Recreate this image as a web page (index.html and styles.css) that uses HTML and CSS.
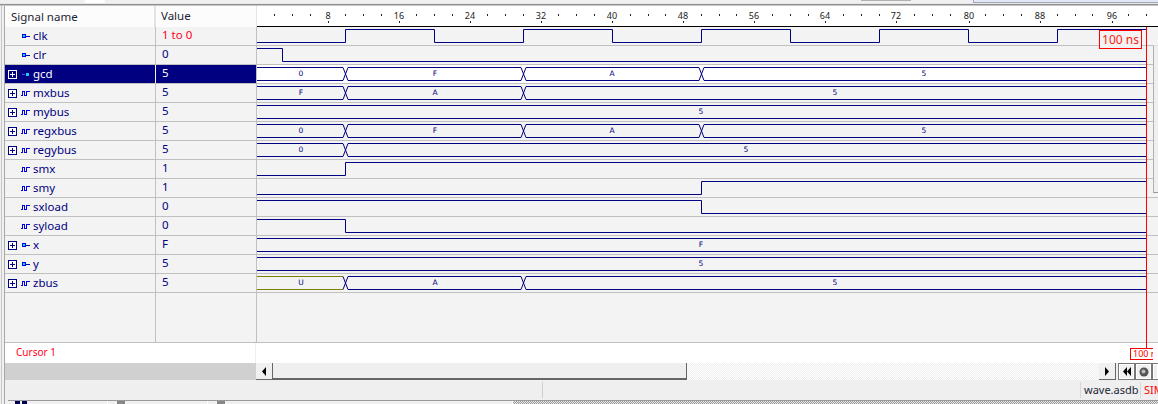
FILE: index.html
```html
<!DOCTYPE html>
<html lang="en">
<head>
<meta charset="utf-8">
<title>wave.asdb</title>
<link rel="stylesheet" href="styles.css">
</head>
<body>
<div class="window">
  <div class="topstrip"><span class="ts-white"></span><span class="ts-gray"></span><span class="ts-blue"></span></div>
  <div class="main">
    <div class="rail"></div>
    <div class="content">
    <div class="panel">
      <div class="row header">
        <div class="name"><span class="head-label">Signal name</span></div>
        <div class="value">Value</div>
        <div class="wave">
          <svg class="ruler" viewBox="257 0 901 20" width="901" height="20">
            <g class="ticks">
              <path d="M274.5 8v2M292.5 8v2M310.5 8v2M345.5 8v2M363.5 8v2M381.5 8v2M416.5 8v2M434.5 8v2M452.5 8v2M487.5 8v2M505.5 8v2M523.5 8v2M558.5 8v2M576.5 8v2M594.5 8v2M630.5 8v2M648.5 8v2M665.5 8v2M701.5 8v2M719.5 8v2M736.5 8v2M772.5 8v2M790.5 8v2M808.5 8v2M843.5 8v2M861.5 8v2M879.5 8v2M914.5 8v2M932.5 8v2M950.5 8v2M985.5 8v2M1003.5 8v2M1021.5 8v2M1057.5 8v2M1075.5 8v2M1092.5 8v2M1128.5 8v2M1146.5 8v2"/>
              <path d="M328.5 15v2M399.5 15v2M470.5 15v2M541.5 15v2M612.5 15v2M683.5 15v2M754.5 15v2M825.5 15v2M896.5 15v2M969.5 15v2M1040.5 15v2M1112.5 15v2"/>
            </g>
            <g class="ruler-text">
              <text x="328" y="13">8</text><text x="399" y="13">16</text><text x="470" y="13">24</text><text x="541" y="13">32</text>
              <text x="612" y="13">40</text><text x="683" y="13">48</text><text x="754" y="13">56</text><text x="825" y="13">64</text>
              <text x="896" y="13">72</text><text x="969" y="13">80</text><text x="1040" y="13">88</text><text x="1112" y="13">96</text>
            </g>
          </svg>
        </div>
      </div>

      <div class="row">
        <div class="name"><span class="box-gap"></span><svg class="ico" viewBox="0 0 10 7" width="10" height="7"><rect class="port" x="1.5" y="1.5" width="3" height="3"/><path class="port-l" d="M5 3.5h4"/></svg><span class="label">clk</span></div>
        <div class="value changed">1 to 0</div>
        <div class="wave"><svg viewBox="257 0 901 19" width="901" height="19"><path class="sig" d="M257 15.5H345.5V2.5H434.5V15.5H523.5V2.5H612.5V15.5H701.5V2.5H790.5V15.5H879.5V2.5H968.5V15.5H1057.5V2.5H1146"/></svg></div>
      </div>

      <div class="row">
        <div class="name"><span class="box-gap"></span><svg class="ico" viewBox="0 0 10 7" width="10" height="7"><rect class="port" x="1.5" y="1.5" width="3" height="3"/><path class="port-l" d="M5 3.5h4"/></svg><span class="label">clr</span></div>
        <div class="value">0</div>
        <div class="wave"><svg viewBox="257 0 901 19" width="901" height="19"><path class="sig" d="M257 2.5H282.5V15.5H1146"/></svg></div>
      </div>

      <div class="row selected">
        <div class="name"><span class="plus"></span><svg class="ico" viewBox="0 0 10 7" width="10" height="7"><path class="int-l" d="M1 3.5h3"/><rect class="int" x="5" y="2" width="3" height="3"/></svg><span class="label">gcd</span></div>
        <div class="value">5</div>
        <div class="wave"><svg viewBox="257 0 901 19" width="901" height="19"><rect class="sel-bg" x="257" y="0" width="889" height="18"/><path class="sig" d="M257 2.5H343L348 15.5H521L526 2.5H699L704 15.5H1146M257 15.5H343L348 2.5H521L526 15.5H699L704 2.5H1146"/><g class="bus-text"><text x="301" y="10.5">0</text><text x="435" y="10.5">F</text><text x="612" y="10.5">A</text><text x="924" y="10.5">5</text></g></svg></div>
      </div>

      <div class="row">
        <div class="name"><span class="plus"></span><svg class="ico" viewBox="0 0 10 7" width="10" height="7"><path class="net" d="M0 5.5H1.5V1.5H3.5V5.5H5.5V1.5H9"/></svg><span class="label">mxbus</span></div>
        <div class="value">5</div>
        <div class="wave"><svg viewBox="257 0 901 19" width="901" height="19"><path class="sig" d="M257 2.5H343L348 15.5H521L526 2.5H1146M257 15.5H343L348 2.5H521L526 15.5H1146"/><g class="bus-text"><text x="301" y="10.5">F</text><text x="435" y="10.5">A</text><text x="835" y="10.5">5</text></g></svg></div>
      </div>

      <div class="row">
        <div class="name"><span class="plus"></span><svg class="ico" viewBox="0 0 10 7" width="10" height="7"><path class="net" d="M0 5.5H1.5V1.5H3.5V5.5H5.5V1.5H9"/></svg><span class="label">mybus</span></div>
        <div class="value">5</div>
        <div class="wave"><svg viewBox="257 0 901 19" width="901" height="19"><path class="sig" d="M257 2.5H1146M257 15.5H1146"/><g class="bus-text"><text x="701" y="10.5">5</text></g></svg></div>
      </div>

      <div class="row">
        <div class="name"><span class="plus"></span><svg class="ico" viewBox="0 0 10 7" width="10" height="7"><path class="net" d="M0 5.5H1.5V1.5H3.5V5.5H5.5V1.5H9"/></svg><span class="label">regxbus</span></div>
        <div class="value">5</div>
        <div class="wave"><svg viewBox="257 0 901 19" width="901" height="19"><path class="sig" d="M257 2.5H343L348 15.5H521L526 2.5H699L704 15.5H1146M257 15.5H343L348 2.5H521L526 15.5H699L704 2.5H1146"/><g class="bus-text"><text x="301" y="10.5">0</text><text x="435" y="10.5">F</text><text x="612" y="10.5">A</text><text x="924" y="10.5">5</text></g></svg></div>
      </div>

      <div class="row">
        <div class="name"><span class="plus"></span><svg class="ico" viewBox="0 0 10 7" width="10" height="7"><path class="net" d="M0 5.5H1.5V1.5H3.5V5.5H5.5V1.5H9"/></svg><span class="label">regybus</span></div>
        <div class="value">5</div>
        <div class="wave"><svg viewBox="257 0 901 19" width="901" height="19"><path class="sig" d="M257 2.5H343L348 15.5H1146M257 15.5H343L348 2.5H1146"/><g class="bus-text"><text x="301" y="10.5">0</text><text x="746" y="10.5">5</text></g></svg></div>
      </div>

      <div class="row">
        <div class="name"><span class="box-gap"></span><svg class="ico" viewBox="0 0 10 7" width="10" height="7"><path class="net" d="M0 5.5H1.5V1.5H3.5V5.5H5.5V1.5H9"/></svg><span class="label">smx</span></div>
        <div class="value">1</div>
        <div class="wave"><svg viewBox="257 0 901 19" width="901" height="19"><path class="sig" d="M257 15.5H345.5V2.5H1146"/></svg></div>
      </div>

      <div class="row">
        <div class="name"><span class="box-gap"></span><svg class="ico" viewBox="0 0 10 7" width="10" height="7"><path class="net" d="M0 5.5H1.5V1.5H3.5V5.5H5.5V1.5H9"/></svg><span class="label">smy</span></div>
        <div class="value">1</div>
        <div class="wave"><svg viewBox="257 0 901 19" width="901" height="19"><path class="sig" d="M257 15.5H701.5V2.5H1146"/></svg></div>
      </div>

      <div class="row">
        <div class="name"><span class="box-gap"></span><svg class="ico" viewBox="0 0 10 7" width="10" height="7"><path class="net" d="M0 5.5H1.5V1.5H3.5V5.5H5.5V1.5H9"/></svg><span class="label">sxload</span></div>
        <div class="value">0</div>
        <div class="wave"><svg viewBox="257 0 901 19" width="901" height="19"><path class="sig" d="M257 2.5H701.5V15.5H1146"/></svg></div>
      </div>

      <div class="row">
        <div class="name"><span class="box-gap"></span><svg class="ico" viewBox="0 0 10 7" width="10" height="7"><path class="net" d="M0 5.5H1.5V1.5H3.5V5.5H5.5V1.5H9"/></svg><span class="label">syload</span></div>
        <div class="value">0</div>
        <div class="wave"><svg viewBox="257 0 901 19" width="901" height="19"><path class="sig" d="M257 2.5H345.5V15.5H1146"/></svg></div>
      </div>

      <div class="row">
        <div class="name"><span class="plus"></span><svg class="ico" viewBox="0 0 10 7" width="10" height="7"><rect class="port" x="1.5" y="1.5" width="3" height="3"/><path class="port-l" d="M5 3.5h4"/></svg><span class="label">x</span></div>
        <div class="value">F</div>
        <div class="wave"><svg viewBox="257 0 901 19" width="901" height="19"><path class="sig" d="M257 2.5H1146M257 15.5H1146"/><g class="bus-text"><text x="701" y="10.5">F</text></g></svg></div>
      </div>

      <div class="row">
        <div class="name"><span class="plus"></span><svg class="ico" viewBox="0 0 10 7" width="10" height="7"><rect class="port" x="1.5" y="1.5" width="3" height="3"/><path class="port-l" d="M5 3.5h4"/></svg><span class="label">y</span></div>
        <div class="value">5</div>
        <div class="wave"><svg viewBox="257 0 901 19" width="901" height="19"><path class="sig" d="M257 2.5H1146M257 15.5H1146"/><g class="bus-text"><text x="701" y="10.5">5</text></g></svg></div>
      </div>

      <div class="row">
        <div class="name"><span class="plus"></span><svg class="ico" viewBox="0 0 10 7" width="10" height="7"><path class="net" d="M0 5.5H1.5V1.5H3.5V5.5H5.5V1.5H9"/></svg><span class="label">zbus</span></div>
        <div class="value">5</div>
        <div class="wave"><svg viewBox="257 0 901 19" width="901" height="19"><path class="undef" d="M257 2.5H343M257 15.5H343"/><path class="sig" d="M343 2.5L348 15.5H521L526 2.5H1146M343 15.5L348 2.5H521L526 15.5H1146"/><g class="bus-text"><text x="301" y="10.5">U</text><text x="435" y="10.5">A</text><text x="835" y="10.5">5</text></g></svg></div>
      </div>

      <div class="row filler">
        <div class="name"></div>
        <div class="value"></div>
        <div class="wave"></div>
      </div>

      <div class="cursor-row">
        <div class="cursor-name">Cursor 1</div>
        <div class="cursor-track"><span class="cursor-flag">100 ns</span></div>
      </div>

      <div class="scroll-row">
        <div class="scroll-left"></div>
        <button class="btn btn-left"><svg viewBox="0 0 6 9" width="6" height="9"><path d="M5 0V9L1 4.5Z"/></svg></button>
        <div class="thumb"></div>
        <div class="scroll-track"></div>
        <button class="btn btn-right"><svg viewBox="0 0 6 9" width="6" height="9"><path d="M1 0V9L5 4.5Z"/></svg></button>
        <button class="btn btn-nav"><svg viewBox="0 0 10 9" width="10" height="9"><path d="M5 0V9L1 4.5ZM9 0V9L5 4.5Z"/></svg></button>
        <button class="btn btn-nav"><svg viewBox="0 0 10 10" width="10" height="10"><circle cx="5" cy="5" r="4.5" fill="#555"/><circle cx="4.5" cy="4.5" r="2" fill="#bbb"/></svg></button>
        <button class="btn btn-nav btn-last"></button>
      </div>

      <div class="marker-line"></div>
      <div class="time-flag">100 ns</div>
      <div class="vscroll"></div>
    </div>
    <div class="status">
      <div class="status-fill"></div>
      <div class="status-cell">wave.asdb</div>
      <div class="status-cell sim">SIM</div>
    </div>
    <div class="bottom-strip">
      <div class="tab tab-first"><span class="tab-ico navy"></span><span class="tab-ico navy"></span></div>
      <div class="tab"><span class="tab-ico gray"></span></div>
      <div class="tab tab-wide"><span class="tab-ico gray"></span></div>
      <div class="dither"></div>
    </div>
    </div>
  </div>
</div>
</body>
</html>
```
FILE: styles.css
```css
* { box-sizing: border-box; }
html, body { margin: 0; padding: 0; }
body { background: #f0f0f0; font-family: "Noto Sans", "Liberation Sans", sans-serif; font-size: 11.5px; color: #000080; overflow: hidden; }

.window { width: 1158px; height: 404px; display: flex; flex-direction: column; overflow: hidden; }

.topstrip { display: flex; align-items: flex-start; height: 6px; flex: none; background: linear-gradient(#f0f0f0 0 3px, #e8e8e8 3px 4px, #8e8e8e 4px 5px, #c8c8c8 5px 6px); }
.ts-white { width: 20px; height: 3px; margin-left: 85px; background: #fff; }
.ts-gray { width: 50px; height: 1px; margin-left: 756px; background: #b0b0b0; }
.ts-blue { width: 185px; height: 3px; margin-left: auto; background: #e2e8f6; border-left: 1px solid #a0a8b8; border-bottom: 1px solid #a0a8b8; }

.main { display: flex; flex: 1; min-height: 0; }
.rail { width: 5px; flex: none; background: linear-gradient(90deg, #f0f0f0 0 1px, #c8c8c8 1px 2px, #f0f0f0 2px 5px); border-right: 1px solid #a8a8a8; }
.content { width: 1153px; flex: none; display: flex; flex-direction: column; }
.panel { position: relative; flex: none; display: flex; flex-direction: column; }

.row { display: flex; height: 19px; flex: none; background: #f3f3f3; border-bottom: 1px solid #c0c0c0; }
.row.header { height: 21px; background: #fff; border-bottom: 0; }
.row.filler { height: 50px; }

.name { width: 151px; flex: none; display: flex; align-items: center; padding-left: 3px; border-right: 1px solid #c0c0c0; white-space: nowrap; }
.label { padding-bottom: 2px; }
.value { width: 101px; flex: none; padding-left: 6px; line-height: 16px; border-right: 1px solid #c0c0c0; color: #000080; }
.wave { flex: 1; min-width: 0; overflow: hidden; }
.wave svg { display: block; }

.header .name { border-right: 2px solid #e4e4e4; color: #1c2433; background: #fcfcfc; padding-left: 6px; }
.header .value { border-right: 1px solid #e4e4e4; color: #1c2433; background: #fcfcfc; padding-left: 5px; line-height: 20px; }
.header .wave { height: 21px; border-bottom: 1px solid #000; }
.head-label { display: block; }

.changed { color: #ff0020; }

.selected .name, .selected .value { background: #000080; color: #fff; }
.selected .name { border-right-color: #f3f3f3; }
.sel-bg { fill: #fff; }

.box-gap { width: 9px; flex: none; }
.plus { width: 9px; height: 9px; flex: none; border: 1px solid #000080; background: linear-gradient(#000080, #000080) center / 5px 1px no-repeat, linear-gradient(#000080, #000080) center / 1px 5px no-repeat, #fff; }
.selected .plus { border-color: #fff; background: linear-gradient(#fff, #fff) center / 5px 1px no-repeat, linear-gradient(#fff, #fff) center / 1px 5px no-repeat, #000080; }
.ico { flex: none; margin-left: 4px; margin-right: 2px; }
.port { fill: #00e0ff; stroke: #0000e0; stroke-width: 1; }
.port-l { stroke: #0000c0; stroke-width: 1; fill: none; }
.int-l { stroke: #2060ff; stroke-width: 1; fill: none; }
.int { fill: #20c8ff; }
.net { stroke: #0000e0; stroke-width: 1.2; fill: none; shape-rendering: crispEdges; }

.sig { fill: none; stroke: #000080; stroke-width: 1; }
.undef { fill: none; stroke: #808000; stroke-width: 1; }
.bus-text text { font-family: "DejaVu Sans", sans-serif; font-size: 7.5px; fill: #000080; text-anchor: middle; }
.ruler-text text { font-family: "Noto Sans", sans-serif; font-size: 9px; fill: #222; text-anchor: middle; }
.ticks path { stroke: #222; stroke-width: 1; fill: none; }

.cursor-row { display: flex; height: 20px; flex: none; background: #fff; }
.cursor-name { width: 251px; flex: none; padding-left: 11px; line-height: 18px; color: #ff0020; font-size: 10px; border-right: 1px solid #eee; }
.cursor-track { flex: 1; position: relative; }
.cursor-flag { position: absolute; left: 874px; top: 5px; width: 23px; height: 12px; line-height: 10px; border: 1px solid #ff0000; border-right: 0; background: #fff; color: #ff0000; font-size: 9px; padding-left: 2px; overflow: hidden; white-space: nowrap; }

.scroll-row { display: flex; height: 17px; flex: none; background: #f0f0f0; }
.scroll-left { width: 251px; flex: none; background: #d0d0d0; }
.btn { appearance: none; padding: 0; margin: 0; display: flex; align-items: center; justify-content: center; height: 17px; background: #f0f0f0; border: 0; border-right: 1px solid #666; border-bottom: 1px solid #666; flex: none; }
.btn svg { fill: #000; display: block; }
.btn-left { width: 17px; }
.thumb { width: 414px; flex: none; background: #efefef; border-right: 1px solid #666; border-bottom: 2px solid #666; }
.scroll-track { flex: 1; background: repeating-conic-gradient(#eee 0 25%, #fff 0 50%) 0 0 / 2px 2px; }
.btn-right { width: 17px; margin-right: 2px; }
.btn-nav { width: 17px; border: 1px solid #777; box-shadow: inset 0 0 0 1px #fff; }
.btn-last { width: 6px; border-right: 0; }

.marker-line { position: absolute; left: 1141px; top: 21px; width: 1px; height: 321px; background: #ff0000; }
.time-flag { position: absolute; left: 1094px; top: 24px; width: 43px; height: 19px; line-height: 17px; border: 1px solid #ff0000; background: #f3f3f3; color: #ff2010; font-size: 12px; text-align: center; white-space: nowrap; }
.vscroll { position: absolute; left: 1148px; top: 39px; width: 5px; height: 148px; background: #efefef; border-left: 1px solid #b0b0b0; border-top: 1px solid #ddd; border-bottom: 1px solid #999; }

.status { display: flex; height: 20px; flex: none; background: #efefef; padding: 2px 0; }
.status-fill { flex: none; width: 538px; border-right: 1px solid #d0d0d0; }
.status-cell { height: 16px; line-height: 16px; padding-left: 3px; font-size: 11px; color: #1c2433; border-left: 1px solid #d8d8d8; white-space: nowrap; overflow: hidden; }
.status-fill + .status-cell { margin-left: auto; width: 60px; }
.sim { color: #ff0000; width: 18px; flex: none; }

.bottom-strip { display: flex; flex: 1; min-height: 0; margin-left: 3px; border-top: 1px solid #999; }
.tab { width: 100px; flex: none; display: flex; gap: 2px; padding-left: 9px; border-right: 1px solid #fff; }
.tab-first { padding-left: 7px; }
.tab-wide { width: 305px; }
.tab-ico { width: 8px; height: 3px; }
.tab-ico.navy { width: 5px; background: #000050; }
.tab-ico.gray { background: #888; }
.dither { flex: 1; background: repeating-conic-gradient(#9a9a9a 0 25%, #e8e8e8 0 50%) 0 0 / 2px 2px; }
```
